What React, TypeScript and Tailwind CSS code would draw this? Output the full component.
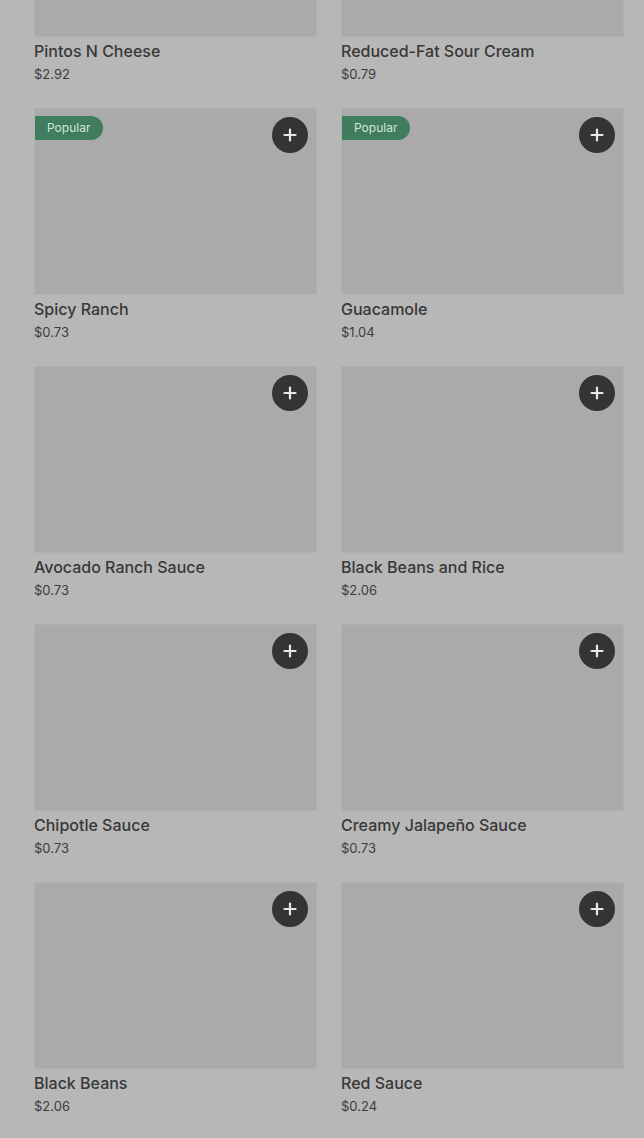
import { FC } from 'react';

type Item = { name: string; price: string; popular?: boolean };

const items: Item[] = [
    { name: 'Pintos N Cheese', price: '$2.92' },
    { name: 'Reduced-Fat Sour Cream', price: '$0.79' },
    { name: 'Spicy Ranch', price: '$0.73', popular: true },
    { name: 'Guacamole', price: '$1.04', popular: true },
    { name: 'Avocado Ranch Sauce', price: '$0.73' },
    { name: 'Black Beans and Rice', price: '$2.06' },
    { name: 'Chipotle Sauce', price: '$0.73' },
    { name: 'Creamy Jalapeño Sauce', price: '$0.73' },
    { name: 'Black Beans', price: '$2.06' },
    { name: 'Red Sauce', price: '$0.24' },
];

const PlusIcon: FC = () => (
    <svg width="14" height="14" viewBox="0 0 14 14">
        <path d="M7 1.5v11M1.5 7h11" stroke="#e8e8e8" strokeWidth="2.2" strokeLinecap="round" />
    </svg>
);

const ItemCard: FC<{ item: Item }> = ({ item }) => {
    return (
        <div className="flex flex-col">
            <div className="relative h-[187px] bg-[#aaaaaa] border border-[#b0b0b0]">
                {item.popular && (
                    <span className="absolute left-0 top-[7px] h-6 pl-3 pr-[13px] flex items-center rounded-r-full bg-[#3f7d5e] text-[12px] text-[#d6e3dc]">
                        Popular
                    </span>
                )}
                <button className="absolute right-[8px] top-[8px] w-9 h-9 rounded-full bg-[#343434] flex items-center justify-center">
                    <PlusIcon />
                </button>
            </div>
            <h3 className="mt-[4px] text-[16px] leading-5 font-medium text-[#383838]">{item.name}</h3>
            <p className="mt-[3px] text-[13px] leading-5 text-[#3c3c3c]">{item.price}</p>
        </div>
    );
};

export default function App() {
    return (
        <div
            className="w-[644px] h-[1138px] overflow-hidden bg-[#b7b7b7]"
            style={{ fontFamily: 'Inter, Roboto, "Noto Sans", sans-serif' }}
        >
            <div className="mt-[-150px] pl-[34px] pr-[20px] grid grid-cols-2 gap-x-6 gap-y-[24px]">
                {items.map((item) => (
                    <ItemCard key={item.name} item={item} />
                ))}
            </div>
        </div>
    );
}
